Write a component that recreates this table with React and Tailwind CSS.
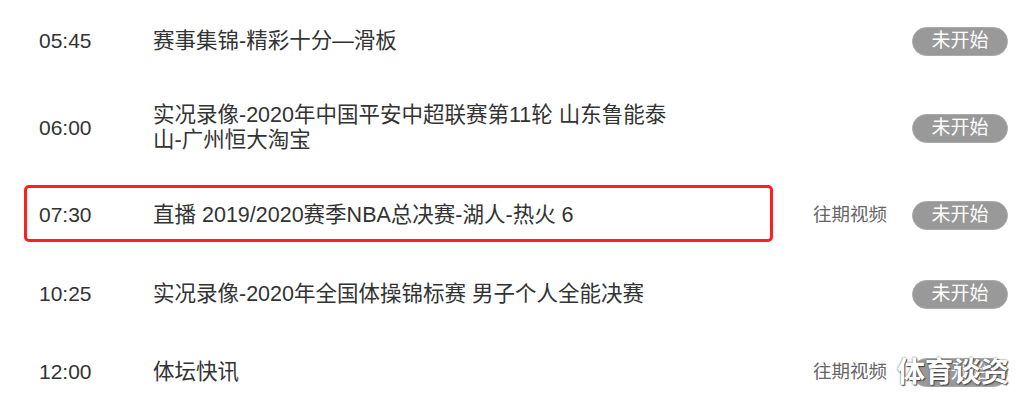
import React from "react";

const schedule = [
  { time: "05:45", title: ["赛事集锦-精彩十分—滑板"], height: "h-[82px]" },
  {
    time: "06:00",
    title: ["实况录像-2020年中国平安中超联赛第11轮 山东鲁能泰", "山-广州恒大淘宝"],
    height: "h-[92px]",
  },
  {
    time: "07:30",
    title: ["直播 2019/2020赛季NBA总决赛-湖人-热火 6"],
    height: "h-[82px]",
    replay: true,
    marked: true,
  },
  {
    time: "10:25",
    title: ["实况录像-2020年全国体操锦标赛 男子个人全能决赛"],
    height: "h-[76px]",
  },
  { time: "12:00", title: ["体坛快讯"], height: "h-[80px]", replay: true },
];

const ScheduleRow = ({ item }) => {
  return (
    <div className={`relative flex items-center pl-[39px] pr-[18px] ${item.height}`}>
      {/* red annotation box */}
      {item.marked && (
        <div className="absolute left-[24px] top-[11px] w-[749px] h-[57px] border-[3px] border-[#ff1f1f] rounded-[5px]" />
      )}
      <div className="w-[114px] shrink-0 text-[21px] text-[#333]">{item.time}</div>
      <div className="flex-1 whitespace-nowrap text-[21.5px] leading-[25px] text-[#333]">
        {item.title.map((line, i) => (
          <div key={i}>{line}</div>
        ))}
      </div>
      {item.replay && (
        <span className="mr-[25px] text-[18.5px] text-[#666]">往期视频</span>
      )}
      <span className="flex items-center justify-center w-[96px] h-[29px] rounded-full bg-[#999] text-white text-[19px] border border-[#aaa]">
        未开始
      </span>
    </div>
  );
};

export default function App() {
  return (
    <div
      className="relative w-[1026px] h-[406px] overflow-hidden bg-white"
      style={{ fontFamily: '"Liberation Sans", "Noto Sans CJK SC", sans-serif' }}
    >
      {schedule.map((item) => (
        <ScheduleRow key={item.time} item={item} />
      ))}
      {/* watermark */}
      <div className="absolute left-[897px] top-[352px] text-[28px] font-semibold text-white [text-shadow:0_0_2px_#555,1px_1px_1px_#444]">
        体育谈资
      </div>
    </div>
  );
}
